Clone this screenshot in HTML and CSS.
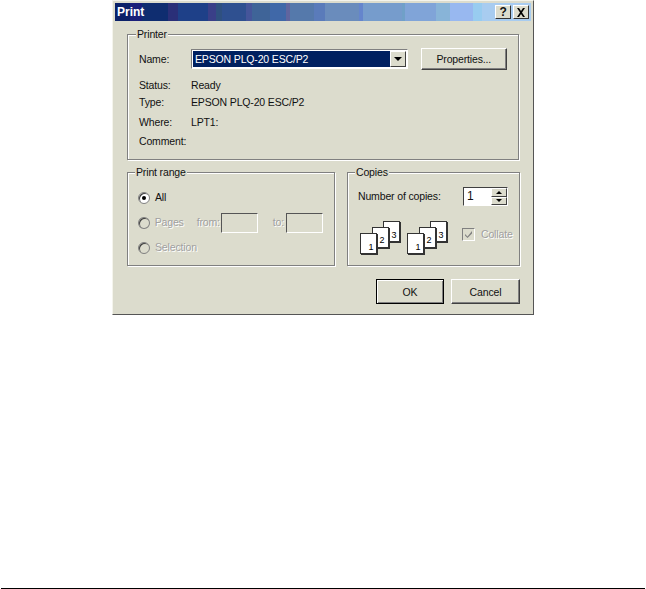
FILE: index.html
```html
<!DOCTYPE html>
<html lang="en">
<head>
<meta charset="UTF-8">
<meta name="viewport" content="width=device-width, initial-scale=1.0">
<title>Print</title>
<link rel="stylesheet" href="styles.css">
</head>
<body>
    <div class="dialog">
        <div class="titlebar">
            <span class="title">Print</span>
            <div class="title-buttons">
                <span class="title-btn">?</span>
                <span class="title-btn title-close">
                    <svg width="10" height="9" viewBox="0 0 10 9"><path d="M1 0h2l2 3 2-3h2L6 4.500 9 9H7L5 6 3 9H1l3-4.500z" fill="#000"/></svg>
                </span>
            </div>
        </div>
        <div class="content">
            <fieldset class="group group-printer">
                <legend>Printer</legend>
                <div class="name-row">
                    <span class="label">Name:</span>
                    <div class="combo">
                        <span class="combo-value">EPSON PLQ-20 ESC/P2</span>
                        <span class="combo-arrow"><i class="arrow-down"></i></span>
                    </div>
                    <button class="btn btn-props">Properties...</button>
                </div>
                <div class="info-row info-status"><span class="label">Status:</span><span>Ready</span></div>
                <div class="info-row info-type"><span class="label">Type:</span><span>EPSON PLQ-20 ESC/P2</span></div>
                <div class="info-row info-where"><span class="label">Where:</span><span>LPT1:</span></div>
                <div class="info-row info-comment"><span class="label">Comment:</span><span></span></div>
            </fieldset>
            <div class="lower-row">
                <fieldset class="group group-range">
                    <legend>Print range</legend>
                    <div class="radio-row">
                        <span class="radio radio-on"></span><span>All</span>
                    </div>
                    <div class="radio-row disabled">
                        <span class="radio"></span><span class="pages-label">Pages</span>
                        <span class="from-label">from:</span><span class="field"></span>
                        <span class="to-label">to:</span><span class="field"></span>
                    </div>
                    <div class="radio-row disabled">
                        <span class="radio"></span><span>Selection</span>
                    </div>
                </fieldset>
                <fieldset class="group group-copies">
                    <legend>Copies</legend>
                    <div class="copies-row">
                        <span>Number of copies:</span>
                        <div class="spinner">
                            <span class="spinner-value">1</span>
                            <div class="spinner-btns">
                                <span class="spin-btn"><i class="arrow-up"></i></span>
                                <span class="spin-btn"><i class="arrow-down small"></i></span>
                            </div>
                        </div>
                    </div>
                    <div class="collate-row">
                        <svg class="pages" width="42" height="35" viewBox="0 0 42 35">
                            <rect x="24" y="1" width="17" height="21" fill="#333"/>
                            <rect x="23.500" y="0.500" width="16" height="20" fill="#fff" stroke="#333"/>
                            <text x="34" y="17" class="page-num">3</text>
                            <rect x="13" y="7" width="17" height="21" fill="#333"/>
                            <rect x="12.500" y="6.500" width="16" height="20" fill="#fff" stroke="#333"/>
                            <text x="22" y="22" class="page-num">2</text>
                            <rect x="1" y="13" width="17" height="21" fill="#333"/>
                            <rect x="0.500" y="12.500" width="16" height="20" fill="#fff" stroke="#333"/>
                            <text x="11" y="29" class="page-num">1</text>
                        </svg>
                        <svg class="pages pages-second" width="42" height="35" viewBox="0 0 42 35">
                            <rect x="24" y="1" width="17" height="21" fill="#333"/>
                            <rect x="23.500" y="0.500" width="16" height="20" fill="#fff" stroke="#333"/>
                            <text x="34" y="17" class="page-num">3</text>
                            <rect x="13" y="7" width="17" height="21" fill="#333"/>
                            <rect x="12.500" y="6.500" width="16" height="20" fill="#fff" stroke="#333"/>
                            <text x="22" y="22" class="page-num">2</text>
                            <rect x="1" y="13" width="17" height="21" fill="#333"/>
                            <rect x="0.500" y="12.500" width="16" height="20" fill="#fff" stroke="#333"/>
                            <text x="11" y="29" class="page-num">1</text>
                        </svg>
                        <span class="check">
                            <svg width="9" height="9" viewBox="0 0 9 9"><path d="M1 4l2.500 2.500L8 1v2.500L3.500 8 1 5.500z" fill="#808080"/></svg>
                        </span>
                        <span class="collate-label">Collate</span>
                    </div>
                </fieldset>
            </div>
            <div class="actions">
                <button class="btn btn-ok">OK</button>
                <button class="btn btn-cancel">Cancel</button>
            </div>
        </div>
    </div>
    <div class="page-rule"></div>
</body>
</html>
```

FILE: styles.css
```css
/* Print dialog, Windows 2000 look */
html, body {
    height: 100%;
}
body {
    margin: 0;
    display: flex;
    flex-direction: column;
    background: #fff;
    color: #111;
    font-family: "Liberation Sans", Arial, sans-serif;
    font-size: 10.500px;
    letter-spacing: -0.150px;
    line-height: 13px;
}
.dialog {
    box-sizing: border-box;
    width: 422px;
    height: 315px;
    margin-left: 112px;
    padding: 2px;
    background: #dcdccd;
    border: 1px solid;
    border-color: #f4f4ec #555 #555 #f4f4ec;
}
.titlebar {
    height: 18px;
    display: flex;
    align-items: center;
    justify-content: space-between;
    padding: 0 2px 0 2px;
    /* banded gradient, like a low colour screenshot */
    background: linear-gradient(to right,
        #0b2168 0 15px, #1a1f7a 15px 27px, #0f2d70 27px 53px, #2a2f78 53px 63px,
        #1e4088 63px 93px, #3a3f88 93px 101px, #2f5080 101px 107px, #2f5090 107px 131px,
        #45559a 131px 137px, #3f6498 137px 155px, #4068a8 155px 171px, #60659f 171px 175px,
        #5579ab 175px 199px, #5a7bba 199px 210px, #6a8cbc 210px 244px, #6585cc 244px 248px,
        #769ccc 248px 287px, #70a0c8 287px 290px, #80a4d8 290px 321px, #88b4d8 321px 335px,
        #98b8f0 335px 358px, #98ccf0 358px 367px, #a8ccf0 367px);
}
.title {
    color: #fff;
    font-weight: bold;
    font-size: 12px;
    letter-spacing: 0;
}
.title-buttons {
    display: flex;
    gap: 2px;
}
.title-btn {
    box-sizing: border-box;
    width: 16px;
    height: 14px;
    display: flex;
    align-items: center;
    justify-content: center;
    background: #dcdccd;
    border: 1px solid;
    border-color: #fff #333 #333 #fff;
    font-weight: bold;
    font-size: 12px;
}
.content {
    padding: 7px 12px 0 12px;
}
.group {
    box-sizing: border-box;
    margin: 0;
    min-width: 0;
    border: 1px solid #808080;
    box-shadow: 1px 1px 0 #fff, inset 1px 1px 0 #fff;
    padding: 0 11px;
}
.group legend {
    margin-left: -3px;
    padding: 0 1px;
    background: #dcdccd;
}
.group-printer {
    height: 132px;
}
.name-row {
    display: flex;
    align-items: center;
    margin-top: 7px;
}
.label {
    width: 52px;
    flex-shrink: 0;
}
.combo {
    box-sizing: border-box;
    width: 218px;
    height: 20px;
    display: flex;
    padding: 1px;
    background: #fff;
    border: 1px solid;
    border-color: #808080 #fff #fff #808080;
}
.combo-value {
    flex: 1;
    padding-left: 2px;
    background: #002060;
    color: #fff;
    line-height: 16px;
}
.combo-arrow {
    box-sizing: border-box;
    width: 16px;
    display: flex;
    align-items: center;
    justify-content: center;
    background: #dcdccd;
    border: 1px solid;
    border-color: #fff #404040 #404040 #fff;
}
.arrow-down {
    width: 0;
    height: 0;
    border: 4px solid transparent;
    border-top-color: #000;
    border-bottom-width: 0;
}
.arrow-down.small, .arrow-up {
    border: 3px solid transparent;
}
.arrow-down.small {
    border-top-color: #000;
    border-bottom-width: 0;
}
.arrow-up {
    width: 0;
    height: 0;
    border-bottom-color: #000;
    border-top-width: 0;
}
.btn {
    box-sizing: border-box;
    padding: 0;
    background: #dcdccd;
    border: 1px solid;
    border-color: #fff #404040 #404040 #fff;
    box-shadow: inset -1px -1px 0 #808080;
    font-family: inherit;
    font-size: inherit;
    letter-spacing: inherit;
    color: #111;
}
.btn-props {
    width: 87px;
    height: 22px;
    margin-left: 13px;
}
.info-row {
    display: flex;
}
.info-status {
    margin-top: 9px;
}
.info-type {
    margin-top: 4px;
}
.info-where {
    margin-top: 7px;
}
.info-comment {
    margin-top: 6px;
}
.lower-row {
    display: grid;
    grid-template-columns: 208px 173px;
    column-gap: 12px;
    margin-top: 6px;
}
.group-range, .group-copies {
    height: 100px;
}
.group-range {
    padding-top: 6px;
    padding-left: 10px;
}
.group-copies {
    padding-left: 10px;
}
.radio-row {
    display: flex;
    align-items: center;
    height: 25px;
}
.radio {
    box-sizing: border-box;
    width: 12px;
    height: 12px;
    margin-right: 5px;
    border: 1px solid #808080;
    border-radius: 50%;
    background: #fff;
    box-shadow: inset 1px 1px 0 #404040;
    position: relative;
}
.radio-on::after {
    content: "";
    position: absolute;
    top: 3px;
    left: 3px;
    width: 4px;
    height: 4px;
    border-radius: 50%;
    background: #000;
}
.disabled {
    color: #a0a0a0;
    text-shadow: 1px 1px 0 #fff;
}
.disabled .radio {
    background: #dcdccd;
}
.pages-label {
    width: 30px;
}
.from-label {
    width: 25px;
    margin-left: 13px;
}
.to-label {
    width: 14px;
    margin-left: 15px;
}
.field {
    box-sizing: border-box;
    width: 38px;
    height: 20px;
    border: 1px solid;
    border-color: #555 #fff #fff #555;
}
.copies-row {
    display: flex;
    align-items: center;
    justify-content: space-between;
    margin-top: 8px;
}
.spinner {
    box-sizing: border-box;
    width: 45px;
    height: 19px;
    display: flex;
    background: #fff;
    border: 1px solid;
    border-color: #404040 #fff #fff #404040;
}
.spinner-value {
    flex: 1;
    padding-left: 3px;
    font-size: 12px;
    line-height: 17px;
}
.spinner-btns {
    display: flex;
    flex-direction: column;
    width: 16px;
}
.spin-btn {
    box-sizing: border-box;
    flex: 1;
    display: flex;
    align-items: center;
    justify-content: center;
    background: #dcdccd;
    border: 1px solid;
    border-color: #fff #404040 #404040 #fff;
}
.collate-row {
    display: flex;
    align-items: flex-start;
    margin-top: 15px;
    margin-left: 2px;
}
.pages {
    flex-shrink: 0;
}
.pages-second {
    margin-left: 5px;
}
.page-num {
    font-family: "Liberation Sans", Arial, sans-serif;
    font-size: 9px;
    text-anchor: middle;
}
.check {
    box-sizing: border-box;
    flex-shrink: 0;
    width: 13px;
    height: 13px;
    margin-top: 7px;
    margin-left: 13px;
    display: flex;
    align-items: center;
    justify-content: center;
    border: 1px solid;
    border-color: #808080 #fff #fff #808080;
}
.collate-label {
    flex-shrink: 0;
    margin-top: 7px;
    margin-left: 6px;
    color: #a0a0a0;
    text-shadow: 1px 1px 0 #fff;
}
.actions {
    display: flex;
    justify-content: flex-end;
    gap: 7px;
    margin-top: 13px;
    margin-right: -1px;
}
.btn-ok {
    width: 68px;
    height: 25px;
    border-color: #000;
    box-shadow: inset 1px 1px 0 #fff, inset -1px -1px 0 #808080;
}
.btn-cancel {
    width: 69px;
    height: 25px;
}
.page-rule {
    height: 1px;
    margin: auto 1px 0;
    background: #000;
}
```
